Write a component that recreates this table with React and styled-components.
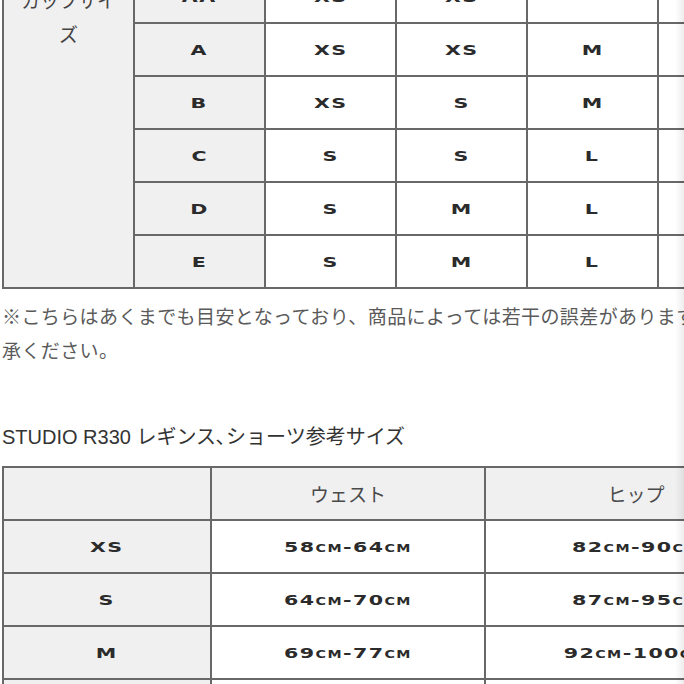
import React from 'react';
import styled, { createGlobalStyle } from 'styled-components';

const GlobalStyle = createGlobalStyle`
  html, body {
    margin: 0;
    padding: 0;
    background: #fff;
  }
  body {
    font-family: "Noto Sans CJK JP", "Noto Sans", sans-serif;
  }
`;

const cupRows = [
  ['AA', 'XS', 'XS', ''],
  ['A', 'XS', 'XS', 'M'],
  ['B', 'XS', 'S', 'M'],
  ['C', 'S', 'S', 'L'],
  ['D', 'S', 'M', 'L'],
  ['E', 'S', 'M', 'L'],
];

const bottomRows = [
  ['XS', '58cm-64cm', '82cm-90cm'],
  ['S', '64cm-70cm', '87cm-95cm'],
  ['M', '69cm-77cm', '92cm-100cm'],
  ['L', '', ''],
];

export default function App() {
  return (
    <>
      <GlobalStyle />
      <Page>
        <SizeTable $width={786} $offset={-31}>
          <colgroup>
            {[0, 1, 2, 3, 4, 5].map((i) => (
              <col key={i} style={{ width: 131 }} />
            ))}
          </colgroup>
          <tbody>
            {cupRows.map((row, r) => (
              <tr key={r}>
                {r === 0 && (
                  <LabelCell rowSpan={cupRows.length} $shade>
                    カップサイ
                    <br />
                    ズ
                  </LabelCell>
                )}
                <Cell $shade>
                  <Mark>{row[0]}</Mark>
                </Cell>
                {row.slice(1).map((v, i) => (
                  <Cell key={i}>
                    <Mark>{v}</Mark>
                  </Cell>
                ))}
                <Cell />
              </tr>
            ))}
          </tbody>
        </SizeTable>

        <Note>
          ※こちらはあくまでも目安となっており、商品によっては若干の誤差がありますことをご了
          <br />
          承ください。
        </Note>

        <Heading>STUDIO R330 レギンス､ショーツ参考サイズ</Heading>

        <SizeTable $width={784}>
          <colgroup>
            <col style={{ width: 208 }} />
            <col style={{ width: 274 }} />
            <col style={{ width: 302 }} />
          </colgroup>
          <tbody>
            <tr>
              <Cell $shade />
              <HeadCell $shade>ウェスト</HeadCell>
              <HeadCell $shade>ヒップ</HeadCell>
            </tr>
            {bottomRows.map((row, r) => (
              <tr key={r}>
                <Cell $shade>
                  <Mark>{row[0]}</Mark>
                </Cell>
                <Cell>
                  <Mark>{row[1]}</Mark>
                </Cell>
                <Cell>
                  <Mark>{row[2]}</Mark>
                </Cell>
              </tr>
            ))}
          </tbody>
        </SizeTable>

        <EdgeShade />
      </Page>
    </>
  );
}

const Page = styled.div`
  position: relative;
  width: 684px;
  height: 684px;
  overflow: hidden;
  box-sizing: border-box;
  padding-left: 2px;
`;

const SizeTable = styled.table`
  border-collapse: collapse;
  table-layout: fixed;
  width: ${(p) => p.$width}px;
  margin-top: ${(p) => p.$offset || 0}px;
`;

const Cell = styled.td`
  height: 51px;
  padding: 0;
  border: 2px solid #686868;
  background: ${(p) => (p.$shade ? '#f1f0f1' : '#ffffff')};
  text-align: center;
  vertical-align: middle;
  white-space: nowrap;
`;

const LabelCell = styled(Cell)`
  vertical-align: top;
  padding-top: 12px;
  font-size: 19px;
  line-height: 34px;
  color: #444;
`;

const HeadCell = styled(Cell)`
  font-size: 19px;
  color: #4a4a4a;
`;

const Mark = styled.span`
  display: inline-block;
  font-family: "DejaVu Sans", sans-serif;
  font-weight: bold;
  font-size: 14.5px;
  letter-spacing: 1px;
  font-variant: small-caps;
  color: #2b2b2b;
  transform: scaleX(1.42) translateY(-2px);
`;

const Note = styled.p`
  margin: 10px 0 0;
  font-size: 19px;
  letter-spacing: 0.4px;
  line-height: 34px;
  color: #5a5a5a;
  white-space: nowrap;
`;

const Heading = styled.h2`
  margin: 57px 0 16px;
  font-family: "Liberation Sans", "Noto Sans CJK JP", sans-serif;
  font-size: 20px;
  font-weight: normal;
  line-height: 26px;
  color: #333;
  white-space: nowrap;
`;

const EdgeShade = styled.div`
  position: absolute;
  top: 0;
  right: 0;
  width: 9px;
  height: 100%;
  background: linear-gradient(to right, rgba(0, 0, 0, 0), rgba(0, 0, 0, 0.07));
  pointer-events: none;
`;
